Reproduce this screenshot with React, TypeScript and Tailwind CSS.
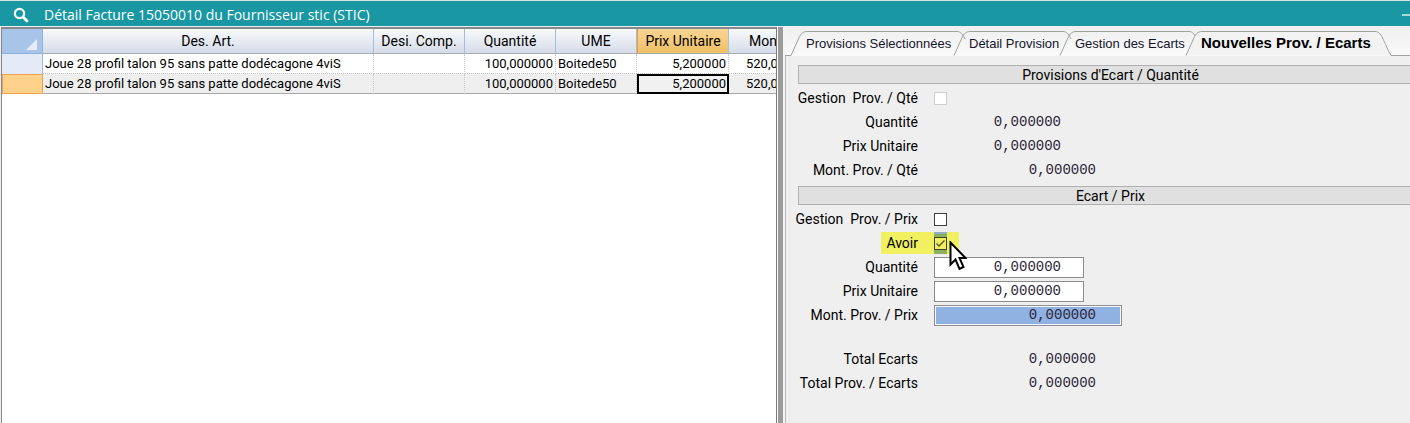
import type { ReactNode } from 'react';

type RowData = { art: string; comp: string; qty: string; ume: string; price: string; amount: string };

const rows: RowData[] = [
  { art: 'Joue 28 profil talon 95 sans patte dodécagone 4viS', comp: '', qty: '100,000000', ume: 'Boitede50', price: '5,200000', amount: '520,0' },
  { art: 'Joue 28 profil talon 95 sans patte dodécagone 4viS', comp: '', qty: '100,000000', ume: 'Boitede50', price: '5,200000', amount: '520,0' },
];

const tabs = [
  { label: 'Provisions Sélectionnées', width: 163, box: 'w-[163px]' },
  { label: 'Détail Provision', width: 106, box: 'w-[106px]' },
  { label: 'Gestion des Ecarts', width: 126, box: 'w-[126px]' },
  { label: 'Nouvelles Prov. / Ecarts', width: 205, box: 'w-[205px]' },
];

function TitleBar() {
  return (
    <header className="flex h-[26px] shrink-0 items-center border-t border-[#dde3e4] bg-[#1998a3] pt-[2px] pl-[13px] text-white">
      <svg width="16" height="16" viewBox="0 0 16 16" fill="none" stroke="currentColor" aria-hidden="true">
        <circle cx="6.5" cy="6.5" r="4.6" strokeWidth="2.2" />
        <path d="M10 10l4 4" strokeWidth="2.8" strokeLinecap="round" />
      </svg>
      <h1 className="ml-[15px] grow font-['Open_Sans',sans-serif] text-[14px] leading-[20px] font-medium whitespace-nowrap">
        Détail Facture 15050010 du Fournisseur stic (STIC)
      </h1>
      <button type="button" aria-label="Réduire" className="h-full w-[8px] shrink-0">
        <span className="block h-[2px] bg-[#a9d8dc]" />
      </button>
    </header>
  );
}

function HeadCell({ children, active }: { children: ReactNode; active?: boolean }) {
  return (
    <th
      scope="col"
      className={
        active
          ? 'border-r border-b border-r-[#a9c0dc] border-b-[#a9a9b0] border-l border-l-[#f09a48] bg-linear-to-b from-[#f9d593] to-[#f1bf63] p-0 font-normal'
          : 'overflow-hidden border-r border-b border-r-[#a3bddd] border-b-[#a9a9b0] bg-linear-to-b from-[#f8f9fb] to-[#d5dce8] p-0 font-normal'
      }
    >
      {children}
    </th>
  );
}

function InvoiceGrid() {
  const cell = 'overflow-hidden border-r border-r-[#c8c8c8] px-[2px] py-0';
  return (
    <section className="ml-px w-[776px] shrink-0 overflow-hidden border-t-2 border-r border-l border-t-[#85888c] border-r-[#77797c] border-l-[#85888c] bg-white">
      <table className="w-[830px] table-fixed border-separate border-spacing-0 whitespace-nowrap">
        <colgroup>
          <col className="w-[41px]" />
          <col className="w-[331px]" />
          <col className="w-[91px]" />
          <col className="w-[91px]" />
          <col className="w-[81px]" />
          <col className="w-[92px]" />
          <col className="w-[103px]" />
        </colgroup>
        <thead className="text-[14px] leading-[18px]">
          <tr className="h-[25px]">
            <td className="border-r border-b border-[#8fb3df] bg-[#a9c4e9] p-0">
              <svg className="mt-[6px] ml-auto mr-[5px]" width="11" height="11" viewBox="0 0 11 11" aria-hidden="true">
                <path d="M11 0v11H0z" fill="#e4ecf7" />
              </svg>
            </td>
            <HeadCell>Des. Art.</HeadCell>
            <HeadCell>Desi. Comp.</HeadCell>
            <HeadCell>Quantité</HeadCell>
            <HeadCell>UME</HeadCell>
            <HeadCell active>Prix Unitaire</HeadCell>
            <th scope="col" className="border-b border-b-[#a9a9b0] bg-linear-to-b from-[#f8f9fb] to-[#d5dce8] pl-[20px] text-left font-normal">
              Mon
            </th>
          </tr>
        </thead>
        <tbody className="text-[13px] leading-[18px]">
          {rows.map((r, i) => {
            const selected = i === 1;
            const line = selected
              ? '[border-right-style:dotted] border-b border-b-[#a9a9a9] bg-[#efefef]'
              : 'border-dotted border-b border-b-[#c4c4c4]';
            return (
              <tr key={i} className="h-[20px]">
                <td className={selected ? 'border border-[#f2a052] bg-[#ffd28c] p-0' : 'border-r border-[#9ebce2] bg-[#e4ebf7] p-0'} />
                <td className={`${cell} ${line}`}>{r.art}</td>
                <td className={`${cell} ${line}`}>{r.comp}</td>
                <td className={`${cell} ${line} text-right`}>{r.qty}</td>
                <td className={`${cell} ${line}`}>{r.ume}</td>
                <td className={selected ? 'border-2 border-black bg-[#f1f1f1] px-[1px] py-0 text-right leading-[16px]' : `${cell} ${line} text-right`}>{r.price}</td>
                <td className={`${line} pl-[17px]`}>{r.amount}</td>
              </tr>
            );
          })}
        </tbody>
      </table>
    </section>
  );
}

function TabStrip() {
  return (
    <div role="tablist" className="flex h-[29px] shrink-0 bg-linear-to-b from-[#efefef] to-[#fafafa] pt-[4px] font-['Liberation_Sans',Arial,sans-serif] text-[13px] text-[#14142c]">
      <div className="w-[6px] shrink-0 border-b border-[#a0a0a0]" />
      {tabs.map(({ label, width, box }, i) => {
        const last = i === tabs.length - 1;
        const end = last
          ? `H${width - 16} C${width - 9} 0.5 ${width - 8} 10 ${width} 24.5`
          : `H${width + 3} C${width + 7} 0.5 ${width + 9} 4 ${width + 11} 8`;
        return (
          <button
            key={label}
            type="button"
            role="tab"
            aria-selected={last}
            className={`${box} relative h-[25px] shrink-0 pl-[15px] text-left whitespace-nowrap ${last ? 'text-[15px] font-bold text-black' : ''}`}
          >
            <svg className="absolute top-0 left-0 overflow-visible" width={width} height="25" fill="none" aria-hidden="true">
              <path
                d={`M0 24.5 L7 9 C9 4 11 0.5 16 0.5 ${end}`}
                stroke="#a0a0a0"
                fill={last ? '#f3f3f3' : 'none'}
              />
            </svg>
            <span className="relative">{label}</span>
          </button>
        );
      })}
      <div className="grow border-b border-[#a0a0a0]" />
    </div>
  );
}

function SectionTitle({ children }: { children: ReactNode }) {
  return (
    <h2 className="-mr-[13px] h-[19px] border border-[#b0b0b0] bg-[#e0e0e0] text-center text-[14px] leading-[18px]">{children}</h2>
  );
}

function Field({ id, label, mark, children }: { id: string; label: string; mark?: boolean; children: ReactNode }) {
  return (
    <div className="flex h-[24px] items-center">
      <div className="flex w-[136px] shrink-0 justify-end">
        <label
          htmlFor={id}
          className={`whitespace-pre ${mark ? 'h-[22px] bg-[#f0f060] pr-[16px] pl-[5px] leading-[22px]' : 'pr-[16px]'}`}
        >
          {label}
        </label>
      </div>
      {children}
    </div>
  );
}

function Value({ id, wide }: { id: string; wide?: boolean }) {
  return (
    <output id={id} className={`text-right font-['Liberation_Mono',monospace] text-[14px] text-[#2c2438] ${wide ? 'w-[162px]' : 'w-[127px]'}`}>
      0,000000
    </output>
  );
}

function Amount({ id, focused }: { id: string; focused?: boolean }) {
  return (
    <input
      id={id}
      type="text"
      defaultValue="0,000000"
      className={`h-[21px] border text-right font-['Liberation_Mono',monospace] text-[14px] text-[#2c2438] outline-none ${
        focused
          ? 'w-[188px] border-[#909090] bg-[#90b2e2] pr-[25px] shadow-[inset_0_0_0_1px_#f4f6fa]'
          : 'w-[150px] border-[#8c8c8c] bg-white pr-[22px]'
      }`}
    />
  );
}

function Pointer() {
  return (
    <svg className="pointer-events-none absolute top-[9px] left-[15px] z-10" width="18" height="30" viewBox="0 0 18 30" aria-hidden="true">
      <path d="M1.5 1.5V23.5L6.5 18.5L10.5 28L14.5 26L10.5 17H16.5Z" fill="#fff" stroke="#000" strokeWidth="2" />
    </svg>
  );
}

function ProvisionForm() {
  return (
    <form className="grow border-l border-[#b8b8b8] pt-[9px] pl-[12px] text-[14px] leading-[20px]">
      <SectionTitle>Provisions d'Ecart / Quantité</SectionTitle>
      <div className="pt-[2px] pb-[4px]">
        <Field id="manage-qty" label="Gestion  Prov. / Qté">
          <input id="manage-qty" type="checkbox" disabled className="size-[13px] appearance-none border border-[#cfcfcf] bg-white" />
        </Field>
        <Field id="q-qty" label="Quantité"><Value id="q-qty" /></Field>
        <Field id="q-price" label="Prix Unitaire"><Value id="q-price" /></Field>
        <Field id="q-amount" label="Mont. Prov. / Qté"><Value id="q-amount" wide /></Field>
      </div>
      <SectionTitle>Ecart / Prix</SectionTitle>
      <div className="pt-[2px]">
        <Field id="manage-price" label="Gestion  Prov. / Prix">
          <input id="manage-price" type="checkbox" className="size-[13px] appearance-none border border-[#404040] bg-white" />
        </Field>
        <Field id="credit" label="Avoir" mark>
          <span className="relative flex h-[22px] w-[25px] bg-[#f0f060]">
            <span className="flex h-[22px] w-[13px] items-center border-t-2 border-[#8fafc4] bg-[#8ab060] pb-[2px]">
              <input
                id="credit"
                type="checkbox"
                defaultChecked
                className="peer size-[13px] appearance-none border border-[#404030] bg-[#f0f060]"
              />
              <svg className="pointer-events-none absolute left-[2px] hidden peer-checked:block" width="9" height="9" viewBox="0 0 9 9" fill="none" aria-hidden="true">
                <path d="M0.5 4.5L3 7L8.5 1.5" stroke="#5c5c30" strokeWidth="1.5" />
              </svg>
            </span>
            <Pointer />
          </span>
        </Field>
        <Field id="p-qty" label="Quantité"><Amount id="p-qty" /></Field>
        <Field id="p-price" label="Prix Unitaire"><Amount id="p-price" /></Field>
        <Field id="p-amount" label="Mont. Prov. / Prix"><Amount id="p-amount" focused /></Field>
      </div>
      <div className="pt-[20px]">
        <Field id="total" label="Total Ecarts"><Value id="total" wide /></Field>
        <Field id="total-prov" label="Total Prov. / Ecarts"><Value id="total-prov" wide /></Field>
      </div>
    </form>
  );
}

export default function App() {
  return (
    <div className="flex min-h-screen flex-col overflow-hidden bg-[#efefef] font-[Roboto,sans-serif] text-black">
      <TitleBar />
      <main className="flex grow pt-px">
        <InvoiceGrid />
        <div className="w-[8px] shrink-0 border-r-2 border-l border-r-[#f4f4f4] border-l-white bg-[#9b9b9b]" />
        <section className="flex min-w-0 grow flex-col overflow-hidden">
          <TabStrip />
          <ProvisionForm />
        </section>
      </main>
    </div>
  );
}
